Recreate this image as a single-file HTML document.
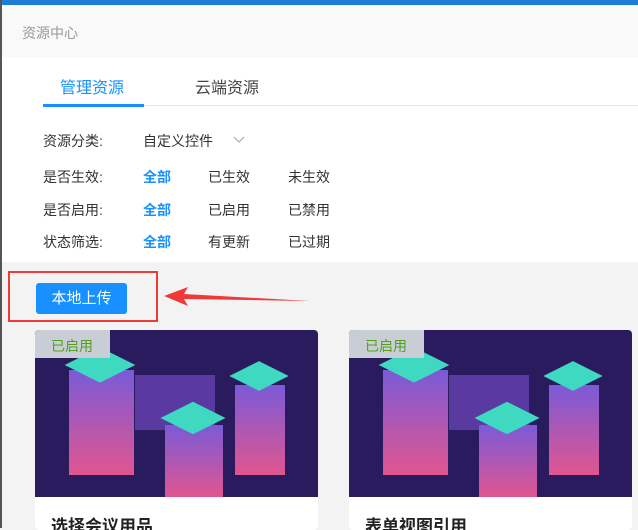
<!DOCTYPE html><html><head><meta charset="utf-8"><style>
*{margin:0;padding:0;box-sizing:border-box}
body{width:638px;height:528px;overflow:hidden;font-family:"Liberation Sans","Noto Sans CJK SC",sans-serif;background:#f3f3f3;position:relative}
.a{position:absolute}
.row{position:absolute;left:43px;font-size:14px;color:#333}
.row span{position:absolute;white-space:nowrap}
.b{color:#1890ff;font-weight:bold}
.card{position:absolute;top:330px;width:283px;height:200px;background:#fff;border-radius:4px;overflow:hidden}
.img{position:absolute;left:0;top:0;width:283px;height:167px;background:#2a1a5e}
.tag{position:absolute;left:0;top:0;width:75px;height:28px;background:#c9ced6;color:#52a01a;font-size:14px;padding:6px 0 0 16px;border-radius:4px 0 0 0}
.bld{position:absolute;background:linear-gradient(#7a5ad8,#e0568f)}
.top{position:absolute;background:#3fd8c0;transform:scaleY(.5) rotate(45deg)}
.title{position:absolute;left:16px;top:182px;font-size:17px;font-weight:bold;color:#222}
</style></head><body>
<div class="a" style="left:0;top:0;width:638px;height:5px;background:#1c7cd6"></div>
<div class="a" style="left:0;top:0;width:2px;height:528px;background:#555"></div>
<div class="a" style="left:2px;top:5px;width:636px;height:53px;background:#f9f9f9"></div>
<div class="a" style="left:22px;top:23px;font-size:14px;color:#999">资源中心</div>
<div class="a" style="left:2px;top:58px;width:636px;height:204px;background:#fff"></div>
<div class="a" style="left:60px;top:74px;font-size:16px;color:#1890ff">管理资源</div>
<div class="a" style="left:195px;top:74px;font-size:16px;color:#444">云端资源</div>
<div class="a" style="left:43px;top:105px;width:595px;height:1px;background:#e5e5e5"></div>
<div class="a" style="left:43px;top:104px;width:101px;height:3px;background:#1890ff"></div>
<div class="row" style="top:131px"><span>资源分类:</span><span style="left:100px">自定义控件</span></div>
<svg class="a" style="left:233px;top:136px" width="12" height="8"><polyline points="1,1 6,6 11,1" fill="none" stroke="#aaa" stroke-width="1.2"/></svg>
<div class="row" style="top:167px"><span>是否生效:</span><span class="b" style="left:100px">全部</span><span style="left:165px">已生效</span><span style="left:245px">未生效</span></div>
<div class="row" style="top:200px"><span>是否启用:</span><span class="b" style="left:100px">全部</span><span style="left:165px">已启用</span><span style="left:245px">已禁用</span></div>
<div class="row" style="top:232px"><span>状态筛选:</span><span class="b" style="left:100px">全部</span><span style="left:165px">有更新</span><span style="left:245px">已过期</span></div>
<div class="a" style="left:8px;top:271px;width:150px;height:51px;border:2px solid #f03a3a"></div>
<div class="a" style="left:36px;top:283px;width:91px;height:31px;background:#1890ff;border-radius:3px;color:#fff;font-size:15px;text-align:center;line-height:31px">本地上传</div>
<svg class="a" style="left:162px;top:284px" width="150" height="24"><polygon points="2,12 26,3 22,10 148,17 22,15 26,22" fill="#f03a3a"/></svg>
<div class="card" style="left:35px"><div class="img">
<div class="a" style="left:100px;top:45px;width:80px;height:55px;background:#5a3aa0"></div>
<div class="bld" style="left:34px;top:40px;width:65px;height:105px"></div>
<div class="top" style="left:40px;top:10px;width:50px;height:50px"></div>
<div class="bld" style="left:130px;top:95px;width:58px;height:72px"></div>
<div class="top" style="left:135px;top:65px;width:46px;height:46px"></div>
<div class="bld" style="left:200px;top:55px;width:50px;height:90px"></div>
<div class="top" style="left:203px;top:25px;width:42px;height:42px"></div>
</div><div class="tag">已启用</div><div class="title">选择会议用品</div></div>
<div class="card" style="left:349px"><div class="img">
<div class="a" style="left:100px;top:45px;width:80px;height:55px;background:#5a3aa0"></div>
<div class="bld" style="left:34px;top:40px;width:65px;height:105px"></div>
<div class="top" style="left:40px;top:10px;width:50px;height:50px"></div>
<div class="bld" style="left:130px;top:95px;width:58px;height:72px"></div>
<div class="top" style="left:135px;top:65px;width:46px;height:46px"></div>
<div class="bld" style="left:200px;top:55px;width:50px;height:90px"></div>
<div class="top" style="left:203px;top:25px;width:42px;height:42px"></div>
</div><div class="tag">已启用</div><div class="title">表单视图引用</div></div>
</body></html>
